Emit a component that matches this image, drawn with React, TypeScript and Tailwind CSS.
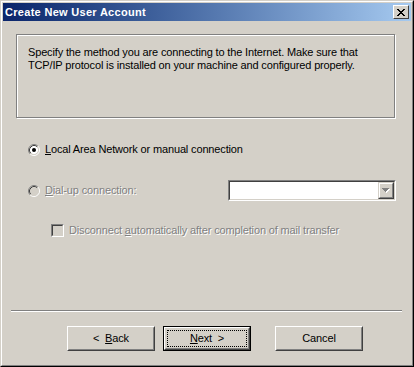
import React from "react";

const arrowPath = "M0 0h7v1H0zM1 1h5v1H1zM2 2h3v1H2zM3 3h1v1H3z";
const closePath =
  "M0 0h2v1H0zM6 0h2v1H6zM1 1h2v1H1zM5 1h2v1H5zM2 2h4v1H2zM3 3h2v1H3zM2 4h4v1H2zM1 5h2v1H1zM5 5h2v1H5zM0 6h2v1H0zM6 6h2v1H6z";

function Radio({ checked, disabled }: { checked?: boolean; disabled?: boolean }) {
  return (
    <svg width="12" height="12" viewBox="0 0 12 12" className="shrink-0">
      <circle cx="6" cy="6" r="4.2" fill={disabled ? "#D4D0C8" : "#fff"} />
      <path d="M2.11 9.89A5.5 5.5 0 0 1 9.89 2.11" stroke="#808080" fill="none" />
      <path d="M9.89 2.11A5.5 5.5 0 0 1 2.11 9.89" stroke="#fff" fill="none" />
      <path d="M2.82 9.18A4.5 4.5 0 0 1 9.18 2.82" stroke="#404040" fill="none" />
      <path d="M9.18 2.82A4.5 4.5 0 0 1 2.82 9.18" stroke="#D4D0C8" fill="none" />
      {checked && <circle cx="6" cy="6" r="2" fill="#000" />}
    </svg>
  );
}

function Button({
  children,
  isDefault,
  className,
}: {
  children: React.ReactNode;
  isDefault?: boolean;
  className?: string;
}) {
  const raised = (
    <div className="h-full border border-t-white border-l-white border-b-[#404040] border-r-[#404040]">
      <div className="h-full border border-t-[#D4D0C8] border-l-[#D4D0C8] border-b-[#808080] border-r-[#808080] flex items-center justify-center p-px">
        {isDefault ? (
          <div className="w-full h-full border border-dotted border-black flex items-center justify-center">
            {children}
          </div>
        ) : (
          children
        )}
      </div>
    </div>
  );
  return (
    <div
      className={
        "w-[88px] h-[25px] " + (isDefault ? "border border-black " : "") + (className ?? "")
      }
    >
      {raised}
    </div>
  );
}

export default function App() {
  return (
    <div className="w-[414px] h-[367px] bg-[#D4D0C8] border border-t-[#D4D0C8] border-l-[#D4D0C8] border-b-black border-r-black font-['Liberation_Sans',Arial,sans-serif] text-[11px] tracking-[-0.15px] text-black">
      <div className="h-full border border-t-white border-l-white border-b-[#808080] border-r-[#808080] p-px flex flex-col">
        {/* title bar */}
        <div className="h-[18px] bg-linear-to-r from-[#0A246A] to-[#A6CAF0] flex items-center pl-[2px] pr-[2px]">
          <span className="text-white font-bold text-[11px] tracking-[0.3px] leading-none">Create New User Account</span>
          <div className="ml-auto w-[16px] h-[14px] bg-[#D4D0C8] border border-t-white border-l-white border-b-[#404040] border-r-[#404040] flex items-center justify-center">
            <svg width="8" height="7" viewBox="0 0 8 7" shapeRendering="crispEdges">
              <path d={closePath} fill="#000" />
            </svg>
          </div>
        </div>

        {/* content */}
        <div className="flex-1 flex flex-col">
          <div className="mt-[13px] ml-[13px] w-[379px] h-[84px] border border-[#808080] shadow-[1px_1px_0_#fff,inset_1px_1px_0_#fff] pt-[11px] pl-[11px] leading-[13px]">
            Specify the method you are connecting to the Internet. Make sure that
            <br />
            TCP/IP protocol is installed on your machine and configured properly.
          </div>

          <div className="mt-[25px] ml-[25px] flex items-center h-[13px] gap-[5px]">
            <Radio checked />
            <span>
              <span className="underline">L</span>ocal Area Network or manual connection
            </span>
          </div>

          <div className="mt-[24px] ml-[25px] flex items-center h-[21px]">
            <div className="w-[200px] flex items-center gap-[5px]">
              <Radio disabled />
              <span className="text-[#808080] [text-shadow:1px_1px_0_#fff]">
                <span className="underline">D</span>ial-up connection:
              </span>
            </div>
            <div className="w-[168px] h-[21px] border border-t-[#808080] border-l-[#808080] border-b-white border-r-white">
              <div className="h-full bg-white border border-t-[#404040] border-l-[#404040] border-b-[#D4D0C8] border-r-[#D4D0C8] flex justify-end">
                <div className="w-[16px] h-full bg-[#D4D0C8] border border-t-[#D4D0C8] border-l-[#D4D0C8] border-b-[#404040] border-r-[#404040]">
                  <div className="h-full border border-t-white border-l-white border-b-[#808080] border-r-[#808080] flex items-center justify-center">
                    <svg width="8" height="5" viewBox="0 0 8 5" shapeRendering="crispEdges">
                      <path d={arrowPath} fill="#fff" transform="translate(1 1)" />
                      <path d={arrowPath} fill="#808080" />
                    </svg>
                  </div>
                </div>
              </div>
            </div>
          </div>

          <div className="mt-[23px] ml-[48px] flex items-center h-[13px] gap-[5px]">
            <div className="w-[13px] h-[13px] border border-t-[#808080] border-l-[#808080] border-b-white border-r-white shrink-0">
              <div className="h-full border border-t-[#404040] border-l-[#404040] border-b-[#D4D0C8] border-r-[#D4D0C8] bg-[#D4D0C8]" />
            </div>
            <span className="text-[#808080] [text-shadow:1px_1px_0_#fff]">
              Disconnect <span className="underline">a</span>utomatically after completion of mail transfer
            </span>
          </div>

          <div className="mt-[73px] ml-[8px] w-[391px] h-[2px] border-t border-t-[#808080] border-b border-b-white" />

          <div className="mt-[14px] ml-[64px] flex">
            <Button>
              <span className="whitespace-pre">
                {"<  "}
                <span className="underline">B</span>ack
              </span>
            </Button>
            <Button isDefault className="ml-[8px]">
              <span className="whitespace-pre">
                <span className="underline">N</span>ext{"  >"}
              </span>
            </Button>
            <Button className="ml-[24px]">Cancel</Button>
          </div>
        </div>
      </div>
    </div>
  );
}
